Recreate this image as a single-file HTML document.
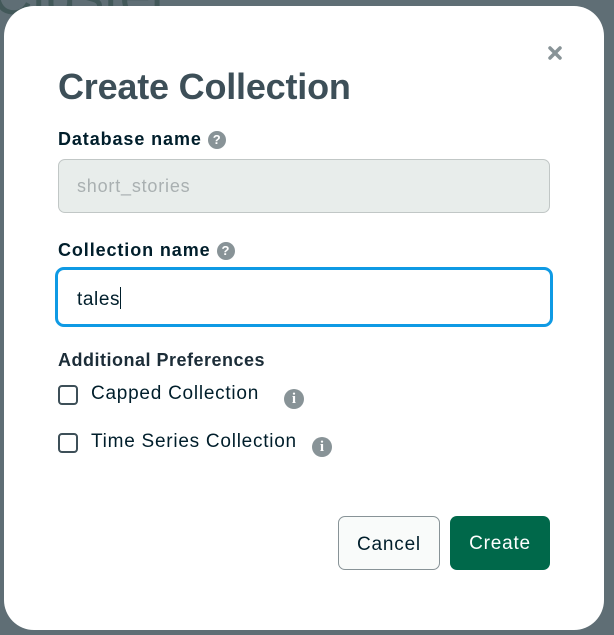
<!DOCTYPE html>
<html><head><meta charset="utf-8"><style>
*{box-sizing:border-box;margin:0;padding:0}
body{width:614px;height:635px;background:#5f6e75;font-family:"Liberation Sans",sans-serif;position:relative;overflow:hidden}
.bgt{position:absolute;left:-8px;top:-38px;font-size:56px;color:#2f4a48;opacity:.6}
.modal{position:absolute;left:4px;top:6px;width:600px;height:624px;background:#fff;border-radius:30px}
.x{position:absolute;left:546px;top:44px}
h1{position:absolute;left:58px;top:66px;font-size:36px;font-weight:bold;color:#3d4f58;letter-spacing:-0.2px}
.lbl{position:absolute;left:58px;font-size:18px;font-weight:bold;color:#001e2b;letter-spacing:0.9px}
.q{display:inline-block;width:18px;height:18px;border-radius:50%;background:#889397;color:#fff;font-size:13px;text-align:center;line-height:18px;font-weight:bold;vertical-align:1px;margin-left:6px;letter-spacing:0}
.in1{position:absolute;left:58px;top:159px;width:492px;height:54px;background:#e8edeb;border:1px solid #c1c7c6;border-radius:7px;font-size:18px;letter-spacing:0.8px;color:#a9b0b1;padding:16px 18px}
.in2{position:absolute;left:55px;top:267px;width:498px;height:60px;border:3px solid #0f9ae4;border-radius:9px;font-size:19px;letter-spacing:0.6px;color:#001e2b;padding:17px 19px}
.cur{display:inline-block;width:1px;height:22px;background:#001e2b;vertical-align:-4px}
.cb{position:absolute;left:58px;width:20px;height:20px;border:2px solid #3d4f58;border-radius:4px}
.ct{position:absolute;left:91px;font-size:19px;letter-spacing:0.75px;color:#001e2b}
.i{position:absolute;width:20px;height:20px;border-radius:50%;background:#889397;color:#fff;font-family:"Liberation Serif",serif;font-weight:bold;font-size:15px;text-align:center;line-height:20px}
.btn{position:absolute;top:516px;height:54px;border-radius:7px;font-size:19px;letter-spacing:0.8px;text-align:center;line-height:55px}
</style></head><body>
<div class="bgt">Cluster</div>
<div class="modal"></div>
<svg class="x" width="18" height="18" viewBox="0 0 18 18"><path d="M4 4L14 14M14 4L4 14" stroke="#889397" stroke-width="3.5" stroke-linecap="round"/></svg>
<h1>Create Collection</h1>
<div class="lbl" style="top:129px">Database name<span class="q">?</span></div>
<div class="in1">short_stories</div>
<div class="lbl" style="top:240px">Collection name<span class="q">?</span></div>
<div class="in2">tales<span class="cur"></span></div>
<div class="lbl" style="top:350px;color:#1c2d38;letter-spacing:0.5px">Additional Preferences</div>
<div class="cb" style="top:385px"></div>
<div class="ct" style="top:383px">Capped Collection</div>
<div class="i" style="left:284px;top:389px">i</div>
<div class="cb" style="top:433px"></div>
<div class="ct" style="top:431px">Time Series Collection</div>
<div class="i" style="left:312px;top:437px">i</div>
<div class="btn" style="left:338px;width:102px;border:1px solid #889397;background:#f9fbfa;color:#001e2b">Cancel</div>
<div class="btn" style="left:450px;width:100px;background:#00684a;color:#fff">Create</div>
</body></html>
